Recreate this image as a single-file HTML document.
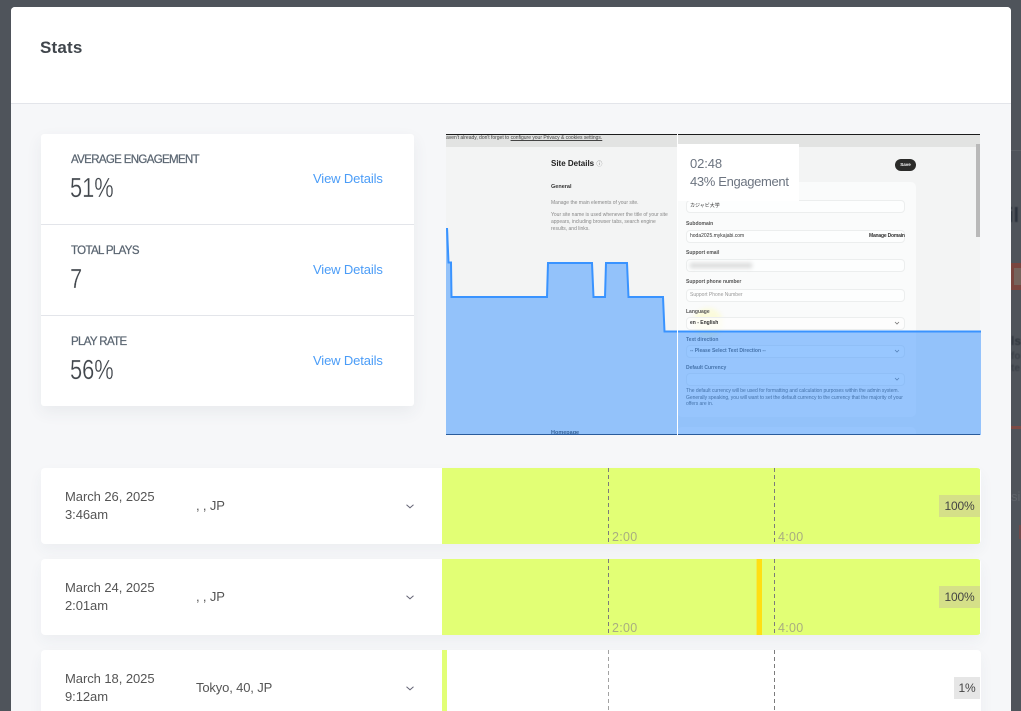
<!DOCTYPE html>
<html lang="en">
<head>
<meta charset="utf-8">
<title>Stats</title>
<style>
html,body{margin:0;padding:0;width:1021px;height:711px;overflow:hidden;background:#4f545b;font-family:"Liberation Sans","Noto Sans CJK JP",sans-serif}
.a{position:absolute;white-space:nowrap}
#bg{position:absolute;left:0;top:0;width:1021px;height:711px;overflow:hidden;background:#4f545b}
#modal{position:absolute;left:11px;top:7px;width:1000px;height:704px;background:#f6f7f9;border-radius:4px 4px 0 0;overflow:hidden}
#page{position:absolute;left:0;top:0;width:1021px;height:711px;overflow:hidden}
.stat-l{font-size:11.5px;color:#5b6672;font-weight:400;letter-spacing:-.65px;-webkit-text-stroke:.25px #5b6672}
.stat-v{font-size:28px;color:#41464c;font-weight:400;transform:scaleX(.78);transform-origin:0 50%;-webkit-text-stroke:.3px #fff}
.vd{font-size:13px;color:#4a9cf7;letter-spacing:-.13px}
.row{position:absolute;left:41px;width:940px;height:76px;background:#fff;border-radius:4px;box-shadow:0 6px 14px rgba(60,70,90,.05);overflow:hidden}
.date{position:absolute;left:24px;top:20px;font-size:13px;line-height:18px;color:#555;letter-spacing:-.06px;white-space:nowrap}
.loc{position:absolute;left:155px;top:30px;font-size:13px;line-height:16px;color:#555;letter-spacing:-.15px;white-space:nowrap}
.dash{position:absolute;top:0;width:1px;height:76px;background:repeating-linear-gradient(to bottom,#7b7b7b 0,#7b7b7b 4px,transparent 4px,transparent 7px)}
.tl{position:absolute;top:62px;font-size:12.5px;line-height:14px;color:#a9ae80;letter-spacing:.3px}
.badge{position:absolute;right:1px;top:27px;height:22px;line-height:22px;text-align:center;font-size:12px;letter-spacing:-.2px;color:#444}
.shot{position:absolute;white-space:nowrap;color:#444;font-size:5px;line-height:7px;filter:blur(.3px)}
.f{position:absolute;left:686px;width:219px;background:#fdfefe;border:1px solid #eceeee;border-radius:4px;box-sizing:border-box;height:13px}
.fl{position:absolute;left:686px;font-size:5px;line-height:6px;color:#555;font-weight:700;white-space:nowrap;filter:blur(.3px)}
.ft{position:absolute;left:690px;font-size:5px;line-height:6px;color:#333;white-space:nowrap;filter:blur(.25px)}
</style>
</head>
<body>
<div id="bg">
  <div class="a" style="left:1011px;top:150px;width:10px;height:1px;background:#5a5f65"></div>
  <div class="a" style="left:1008px;top:204px;font-size:20px;font-weight:700;color:#2c333d;line-height:24px;filter:blur(.5px)">il</div>
  <div class="a" style="left:1011px;top:263px;width:10px;height:27px;background:#79453f"></div>
  <div class="a" style="left:1014px;top:268px;width:7px;height:17px;background:#75635c"></div>
  <div class="a" style="left:1011px;top:335px;font-size:12px;font-weight:700;color:#30363e;line-height:12px;filter:blur(.4px)">ls</div>
  <div class="a" style="left:1011px;top:352px;font-size:10px;font-weight:700;color:#3a4048;line-height:10px;filter:blur(.4px)">fo</div>
  <div class="a" style="left:1011px;top:364px;font-size:10px;font-weight:700;color:#3a4048;line-height:10px;filter:blur(.4px)">te</div>
  <div class="a" style="left:1011px;top:426px;width:10px;height:3px;background:#7d4a44"></div>
  <div class="a" style="left:1011px;top:490px;font-size:13px;color:#5f646b;line-height:14px">sic</div>
  <div class="a" style="left:1019px;top:525px;width:2px;height:14px;background:#70494a"></div>
</div>
<div id="modal">
  <div class="a" style="left:0;top:0;width:1000px;height:96px;background:#fff;border-bottom:1px solid #e3e5ea"></div>
</div>
<div id="page">
  <div class="a" style="left:40px;top:38px;font-size:17px;line-height:20px;font-weight:700;color:#40464c;letter-spacing:.2px">Stats</div>

  <div class="a" style="left:41px;top:134px;width:373px;height:272px;background:#fff;border-radius:3px;box-shadow:0 6px 16px rgba(60,70,90,.07)"></div>
  <div class="a" style="left:41px;top:224px;width:373px;height:1px;background:#e3e5ea"></div>
  <div class="a" style="left:41px;top:315px;width:373px;height:1px;background:#e3e5ea"></div>

  <div class="a stat-l" style="left:71px;top:153px;line-height:14px">AVERAGE ENGAGEMENT</div>
  <div class="a stat-v" style="left:70px;top:171px;line-height:34px">51%</div>
  <div class="a vd" style="left:313px;top:171px;line-height:16px">View Details</div>

  <div class="a stat-l" style="left:71px;top:244px;line-height:14px">TOTAL PLAYS</div>
  <div class="a stat-v" style="left:70px;top:262px;line-height:34px">7</div>
  <div class="a vd" style="left:313px;top:262px;line-height:16px">View Details</div>

  <div class="a stat-l" style="left:71px;top:335px;line-height:14px">PLAY RATE</div>
  <div class="a stat-v" style="left:70px;top:353px;line-height:34px">56%</div>
  <div class="a vd" style="left:313px;top:353px;line-height:16px">View Details</div>

  <!-- video frame -->
  <div class="a" style="left:446px;top:134px;width:534px;height:301px;background:#f3f4f4;overflow:hidden"></div>
  <div class="a" style="left:446px;top:134px;width:534px;height:1px;background:#1c1c1c"></div>
  <div class="a" style="left:446px;top:135px;width:534px;height:12px;background:#e2e3e2"></div>
  <div class="a" style="left:976px;top:144px;width:4px;height:93px;background:#b9b9b9"></div>
  <div class="shot" style="left:446px;top:135px;text-decoration:none;letter-spacing:-.02px">aven't already, don't forget to <u>configure your Privacy &amp; cookies settings.</u></div>
  <div class="shot" style="left:551px;top:159px;font-size:8px;line-height:10px;font-weight:700;color:#222">Site Details <span style="font-weight:400;color:#777;font-size:6px">&#9432;</span></div>
  <div class="shot" style="left:551px;top:184px;font-size:5.5px;font-weight:700;color:#333">General</div>
  <div class="shot" style="left:551px;top:200px;color:#888;">Manage the main elements of your site.</div>
  <div class="shot" style="left:551px;top:212px;color:#888">Your site name is used whenever the title of your site</div>
  <div class="shot" style="left:551px;top:219px;color:#888">appears, including browser tabs, search engine</div>
  <div class="shot" style="left:551px;top:226px;color:#888">results, and links.</div>
  <div class="shot" style="left:551px;top:430px;font-size:5.5px;font-weight:700;color:#333">Homepage</div>

  <div class="a" style="left:895px;top:159px;width:21px;height:12px;border-radius:6px;background:#2b2b29;color:#fff;font-size:4.5px;line-height:12px;text-align:center;font-weight:700">Save</div>
  <div class="a" style="left:677px;top:182px;width:239px;height:235px;background:#fafbfb;border-radius:5px"></div>
  <div class="a" style="left:677px;top:427px;width:239px;height:8px;background:#fafbfb;border-radius:5px 5px 0 0"></div>

  <div class="f" style="top:200px"></div>
  <div class="ft" style="top:203px">カジャビ大学</div>
  <div class="fl" style="top:221px">Subdomain</div>
  <div class="f" style="top:230px"></div>
  <div class="ft" style="top:233px">hoda2025.mykajabi.com</div>
  <div class="ft" style="left:869px;top:233px;font-weight:700;letter-spacing:-.2px">Manage Domain</div>
  <div class="fl" style="top:250px">Support email</div>
  <div class="f" style="top:259px"></div>
  <div class="a" style="left:690px;top:263px;width:62px;height:5px;background:#d8d9d9;filter:blur(2px)"></div>
  <div class="fl" style="top:279px">Support phone number</div>
  <div class="f" style="top:289px"></div>
  <div class="ft" style="top:292px;color:#999">Support Phone Number</div>
  <div class="a" style="left:693px;top:308px;width:30px;height:30px;border-radius:50%;background:#fbfbdc;filter:blur(2px)"></div>
  <div class="fl" style="top:309px">Language</div>
  <div class="f" style="top:317px;background:rgba(253,254,254,.7)"></div>
  <div class="ft" style="top:320px;font-weight:700">en - English</div>
  <div class="fl" style="top:337px">Text direction</div>
  <div class="f" style="top:345px"></div>
  <div class="ft" style="top:348px;font-weight:700;color:#555">-- Please Select Text Direction --</div>
  <div class="fl" style="top:365px">Default Currency</div>
  <div class="f" style="top:373px"></div>
  <div class="fl" style="top:388px;font-weight:400;letter-spacing:-.04px">The default currency will be used for formatting and calculation purposes within the admin system.</div>
  <div class="fl" style="top:395px;font-weight:400;letter-spacing:-.04px">Generally speaking, you will want to set the default currency to the currency that the majority of your</div>
  <div class="fl" style="top:401px;font-weight:400;letter-spacing:-.04px">offers are in.</div>
  <svg class="a" style="left:893px;top:319px" width="10" height="70" viewBox="0 0 10 70" fill="none" stroke="#777" stroke-width=".8">
    <path d="M2 3l2 2 2-2M2 31l2 2 2-2M2 59l2 2 2-2"/>
  </svg>

  <!-- engagement chart -->
  <svg class="a" style="left:446px;top:134px" width="535" height="301" viewBox="446 134 535 301">
    <path d="M446 228L448 228L449 262L451 262L452 297L547 297L548 263L592 263L593 297L605 297L606 263L627 263L628 297L663 297L664 331L981 331L981 435L446 435Z" fill="rgba(51,144,255,.5)"/>
    <path d="M447 228L448.500 262.500L451 262.500L451.500 297L547 297L548 263L592 263L593.500 297L605 297L606 263L627 263L628.500 297L663 297L664.500 331.500L981 331.500" fill="none" stroke="#3993ff" stroke-width="2"/>
  </svg>
  <div class="a" style="left:446px;top:434px;width:534px;height:1px;background:#2a5c9c"></div>
  <div class="a" style="left:677px;top:134px;width:1px;height:301px;background:#fff"></div>
  <div class="a" style="left:678px;top:144px;width:121px;height:57px;background:#fff"></div>
  <div class="a" style="left:690px;top:155px;font-size:13px;line-height:18px;color:#6c7480;letter-spacing:-.1px">02:48</div>
  <div class="a" style="left:690px;top:173px;font-size:13px;line-height:18px;color:#6c7480;letter-spacing:-.34px">43% Engagement</div>

  <!-- rows -->
  <div class="row" style="top:468px">
    <div class="date">March 26, 2025<br>3:46am</div>
    <div class="loc">, , JP</div>
    <svg class="a" style="left:365px;top:36px" width="8" height="5" viewBox="0 0 8 5" fill="none" stroke="#667" stroke-width="1"><path d="M.5 .8l3.500 3 3.500-3"/></svg>
    <div class="a" style="left:401px;top:0;width:538px;height:76px;background:#e2ff75"></div>
    <div class="dash" style="left:567px"></div>
    <div class="dash" style="left:733px"></div>
    <div class="tl" style="left:571px">2:00</div>
    <div class="tl" style="left:737px">4:00</div>
    <div class="badge" style="width:41px;background:#d5e088">100%</div>
  </div>

  <div class="row" style="top:559px">
    <div class="date">March 24, 2025<br>2:01am</div>
    <div class="loc">, , JP</div>
    <svg class="a" style="left:365px;top:36px" width="8" height="5" viewBox="0 0 8 5" fill="none" stroke="#667" stroke-width="1"><path d="M.5 .8l3.500 3 3.500-3"/></svg>
    <div class="a" style="left:401px;top:0;width:538px;height:76px;background:#e2ff75"></div>
    <div class="a" style="left:715px;top:0;width:1px;height:76px;background:#f0ee50"></div>
    <div class="a" style="left:716px;top:0;width:5px;height:76px;background:#ffdf12"></div>
    <div class="dash" style="left:567px"></div>
    <div class="dash" style="left:733px"></div>
    <div class="tl" style="left:571px">2:00</div>
    <div class="tl" style="left:737px">4:00</div>
    <div class="badge" style="width:41px;background:#d5e088">100%</div>
  </div>

  <div class="row" style="top:650px">
    <div class="date">March 18, 2025<br>9:12am</div>
    <div class="loc">Tokyo, 40, JP</div>
    <svg class="a" style="left:365px;top:36px" width="8" height="5" viewBox="0 0 8 5" fill="none" stroke="#667" stroke-width="1"><path d="M.5 .8l3.500 3 3.500-3"/></svg>
    <div class="a" style="left:401px;top:0;width:5px;height:76px;background:#e2ff75"></div>
    <div class="dash" style="left:567px;opacity:.7"></div>
    <div class="dash" style="left:733px"></div>
    <div class="badge" style="width:26px;background:#e6e6e6">1%</div>
  </div>
</div>
</body>
</html>
